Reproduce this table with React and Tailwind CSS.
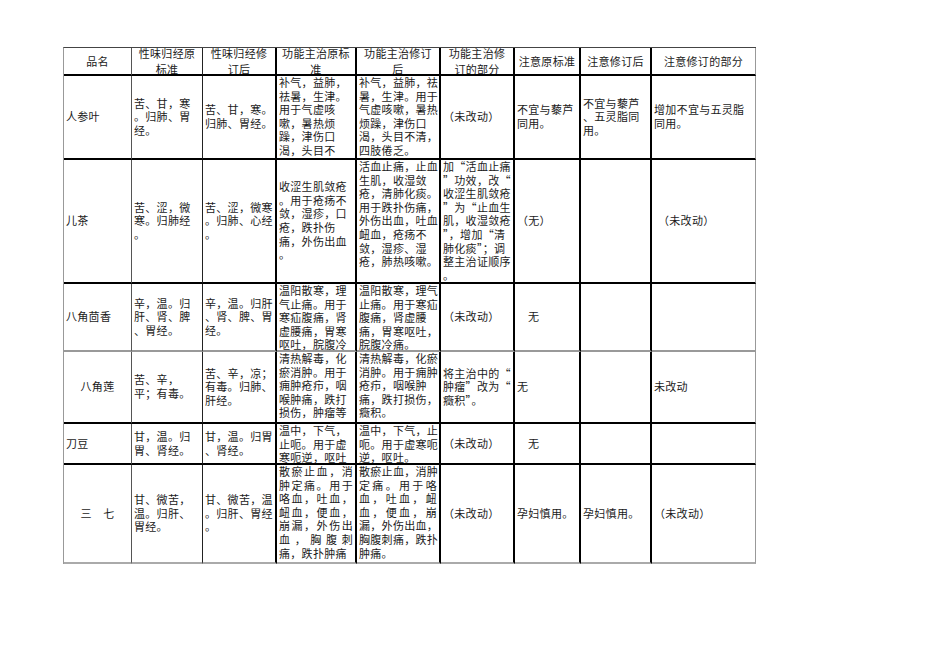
import clsx from "clsx";

// 竖线（每列右边框）
const colBorder = [
  "border-r border-r-[#555]",
  "border-r border-r-[#222]",
  "border-r-2 border-r-black",
  "border-r-2 border-r-black",
  "border-r-2 border-r-black",
  "border-r-2 border-r-black",
  "border-r-2 border-r-black",
  "border-r-2 border-r-black",
  "border-r border-r-[#999]",
];

// 横线（每行下边框）
const rowBorder = [
  "border-b-2 border-b-black",
  "border-b-2 border-b-black",
  "border-b-2 border-b-black",
  "border-b-2 border-b-[#999]",
  "border-b-2 border-b-black",
  "border-b-2 border-b-black",
  "border-b-2 border-b-[#aaa]",
];

const header = [
  ["品名"],
  ["性味归经原", "标准"],
  ["性味归经修", "订后"],
  ["功能主治原标", "准"],
  ["功能主治修订", "后"],
  ["功能主治修", "订的部分"],
  ["注意原标准"],
  ["注意修订后"],
  ["注意修订的部分"],
];

const rows = [
  [
    { t: ["人参叶"] },
    { t: ["苦、甘，寒", "。归肺、胃", "经。"] },
    { t: ["苦、甘，寒。", "归肺、胃经。"] },
    { t: ["补气，益肺，", "祛暑，生津。", "用于气虚咳", "嗽，暑热烦", "躁，津伤口", "渴，头目不", "清，四肢倦", "乏。"], top: true },
    { t: ["补气，益肺，祛", "暑，生津。用于", "气虚咳嗽，暑热", "烦躁，津伤口", "渴，头目不清，", "四肢倦乏。"], top: true },
    { t: ["（未改动）"] },
    { t: ["不宜与藜芦", "同用。"] },
    { t: ["不宜与藜芦", "、五灵脂同", "用。"] },
    { t: ["增加不宜与五灵脂", "同用。"] },
  ],
  [
    { t: ["儿茶"] },
    { t: ["苦、涩，微", "寒。归肺经", "。"] },
    { t: ["苦、涩，微寒", "。归肺、心经", "。"] },
    { t: ["收涩生肌敛疮", "。用于疮疡不", "敛，湿疹，口", "疮，跌扑伤", "痛，外伤出血", "。"] },
    { t: ["活血止痛，止血", "生肌，收湿敛", "疮，清肺化痰。", "用于跌扑伤痛，", "外伤出血，吐血", "衄血，疮疡不", "敛，湿疹、湿", "疮，肺热咳嗽。"], top: true },
    { t: ["加“活血止痛", "”功效，改“", "收涩生肌敛疮", "”为“止血生", "肌，收湿敛疮", "”，增加“清", "肺化痰”；调", "整主治证顺序", "。"], top: true },
    { t: ["（无）"] },
    { t: [""] },
    { t: ["（未改动）"], pad: "pl-[6px]" },
  ],
  [
    { t: ["八角茴香"] },
    { t: ["辛，温。归", "肝、肾、脾", "、胃经。"] },
    { t: ["辛，温。归肝", "、肾、脾、胃", "经。"] },
    { t: ["温阳散寒，理", "气止痛。用于", "寒疝腹痛，肾", "虚腰痛，胃寒", "呕吐，脘腹冷", "痛。"], top: true },
    { t: ["温阳散寒，理气", "止痛。用于寒疝", "腹痛，肾虚腰", "痛，胃寒呕吐，", "脘腹冷痛。"], top: true },
    { t: ["（未改动）"] },
    { t: ["无"], pad: "pl-[13px]" },
    { t: [""] },
    { t: [""] },
  ],
  [
    { t: ["八角莲"], center: true },
    { t: ["苦、辛，", "平；有毒。"] },
    { t: ["苦、辛，凉；", "有毒。归肺、", "肝经。"] },
    { t: ["清热解毒，化", "瘀消肿。用于", "痈肿疮疖，咽", "喉肿痛，跌打", "损伤，肿瘤等"], top: true },
    { t: ["清热解毒，化瘀", "消肿。用于痈肿", "疮疖，咽喉肿", "痛，跌打损伤，", "癥积。"], top: true },
    { t: ["将主治中的“", "肿瘤”改为“", "癥积”。"] },
    { t: ["无"] },
    { t: [""] },
    { t: ["未改动"] },
  ],
  [
    { t: ["刀豆"] },
    { t: ["甘，温。归", "胃、肾经。"] },
    { t: ["甘，温。归胃", "、肾经。"] },
    { t: ["温中，下气，", "止呃。用于虚", "寒呃逆，呕吐"], top: true },
    { t: ["温中，下气，止", "呃。用于虚寒呃", "逆，呕吐。"], top: true },
    { t: ["（未改动）"] },
    { t: ["无"], pad: "pl-[13px]" },
    { t: [""] },
    { t: [""] },
  ],
  [
    { t: ["三　七"], center: true },
    { t: ["甘、微苦，", "温。归肝、", "胃经。"] },
    { t: ["甘、微苦，温", "。归肝、胃经", "。"] },
    { t: ["散瘀止血，消", "肿定痛。用于", "咯血，吐血，", "衄血，便血，", "崩漏，外伤出", "血，胸腹刺", "痛，跌扑肿痛"], top: true, justify: true },
    { t: ["散瘀止血，消肿", "定痛。用于咯", "血，吐血，衄", "血，便血，崩", "漏，外伤出血，", "胸腹刺痛，跌扑", "肿痛。"], top: true, justify: true },
    { t: ["（未改动）"] },
    { t: ["孕妇慎用。"] },
    { t: ["孕妇慎用。"] },
    { t: ["（未改动）"] },
  ],
];

function Cell({ cell, col, row }) {
  return (
    <div
      className={clsx(
        "flex min-w-0 flex-col overflow-hidden px-[2px] leading-[13.6px]",
        colBorder[col],
        rowBorder[row],
        cell.top ? "justify-start" : "justify-center",
        cell.center ? "items-center" : "items-start",
        cell.pad
      )}
    >
      {cell.t.map((line, i) => (
        <div
          key={i}
          className={clsx(
            "whitespace-nowrap",
            cell.justify && i < cell.t.length - 1 && "self-stretch text-justify [text-align-last:justify]"
          )}
        >
          {line}
        </div>
      ))}
    </div>
  );
}

export default function App() {
  return (
    <div className="min-h-screen w-full bg-white pt-[47px] pl-[63px] font-['Noto_Sans_CJK_SC',sans-serif] text-[11px] tracking-[0.3px] text-[#1a1a1a]">
      <div className="grid w-max grid-cols-[68px_71px_74px_80px_84px_74px_66px_71px_104px] grid-rows-[28px_84px_124px_68px_72px_41px_99px] border-t border-l border-t-[#444] border-l-[#999]">
        {/* 表头 */}
        {header.map((lines, c) => (
          <div
            key={c}
            className={clsx(
              "flex min-w-0 flex-col items-center justify-center overflow-hidden text-center leading-[16px]",
              colBorder[c],
              rowBorder[0]
            )}
          >
            {lines.map((l, i) => (
              <div key={i} className="whitespace-nowrap">
                {l}
              </div>
            ))}
          </div>
        ))}

        {/* 表体 */}
        {rows.map((cells, r) =>
          cells.map((cell, c) => <Cell key={`${r}-${c}`} cell={cell} col={c} row={r + 1} />)
        )}
      </div>
    </div>
  );
}
